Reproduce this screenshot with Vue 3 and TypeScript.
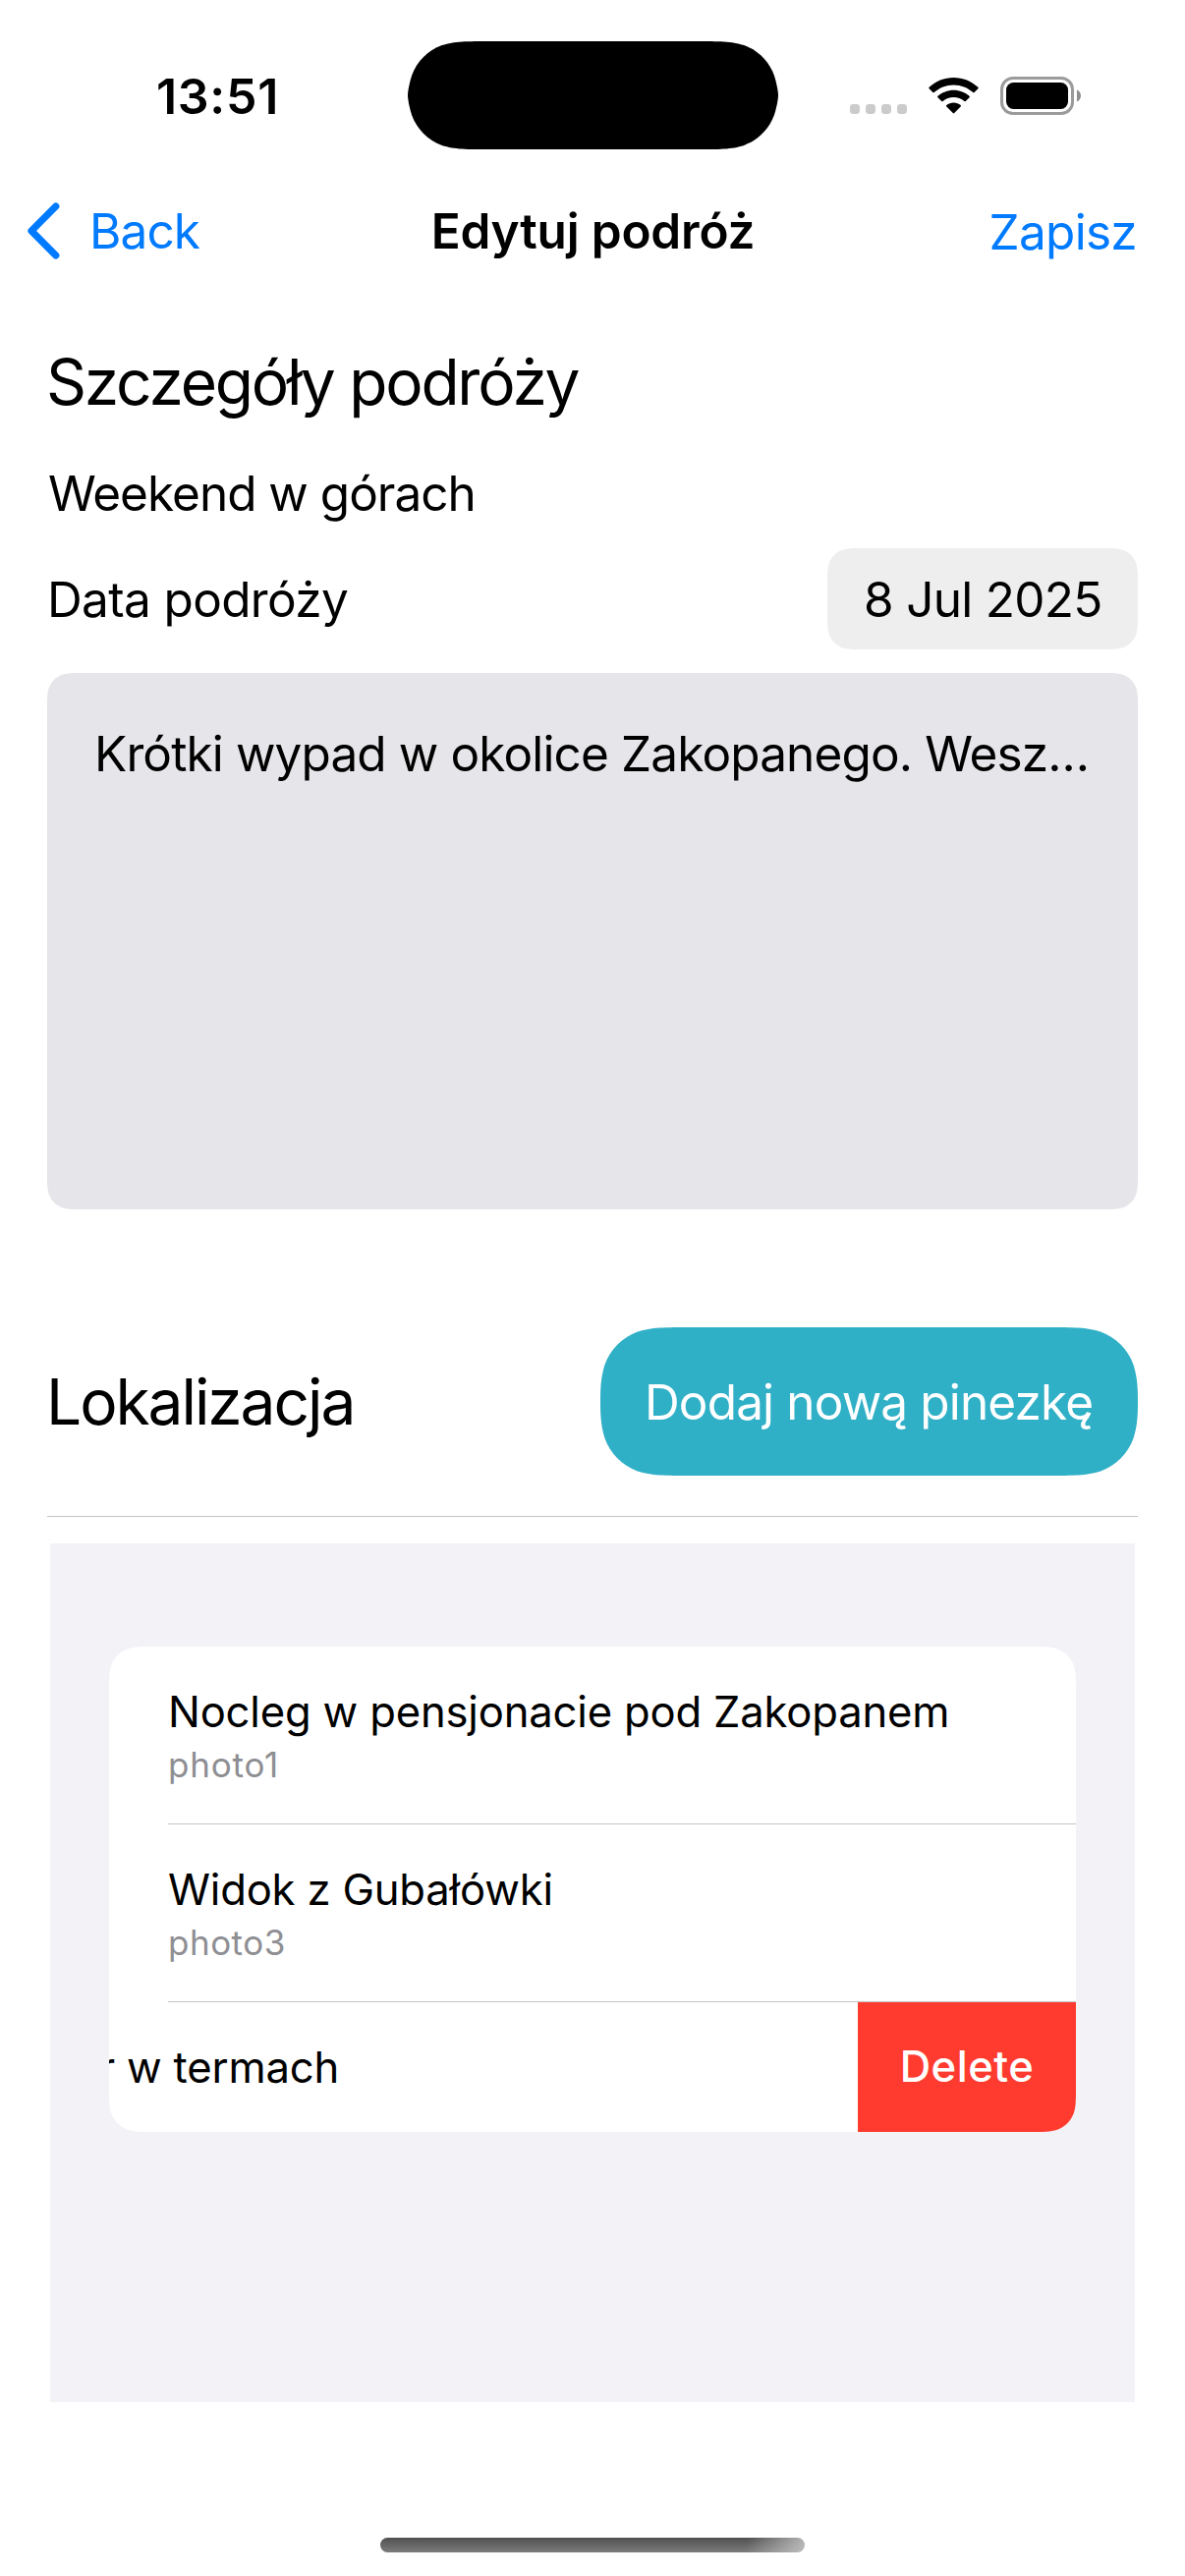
<script setup lang="ts">
interface Pin {
  title: string
  photo: string
  tracking: string
}

const pins: Pin[] = [
  { title: 'Nocleg w pensjonacie pod Zakopanem', photo: 'photo1', tracking: '0.8px' },
  { title: 'Widok z Gubałówki', photo: 'photo3', tracking: '0.5px' },
]

/** Continuous-curvature rounded rectangle, returned as a CSS clip path. */
function smoothRect(w: number, h: number, r: number): string {
  const ax = Math.min(1.528665 * r, w / 2)
  const ay = Math.min(1.528665 * r, h / 2)
  const bx = Math.min(1.08849296 * r, ax)
  const by = Math.min(1.08849296 * r, ay)
  const cx = Math.min(0.86840694 * r, bx)
  const cy = Math.min(0.86840694 * r, by)
  const d = 0.63149379 * r
  const e = 0.07491139 * r
  const f = 0.37282383 * r
  const g = 0.16905956 * r
  return `path("${[
    `M${ax} 0 L${w - ax} 0`,
    `C${w - bx} 0 ${w - cx} 0 ${w - d} ${e}`,
    `C${w - f} ${g} ${w - g} ${f} ${w - e} ${d}`,
    `C${w} ${cy} ${w} ${by} ${w} ${ay}`,
    `L${w} ${h - ay}`,
    `C${w} ${h - by} ${w} ${h - cy} ${w - e} ${h - d}`,
    `C${w - g} ${h - f} ${w - f} ${h - g} ${w - d} ${h - e}`,
    `C${w - cx} ${h} ${w - bx} ${h} ${w - ax} ${h}`,
    `L${ax} ${h}`,
    `C${bx} ${h} ${cx} ${h} ${d} ${h - e}`,
    `C${f} ${h - g} ${g} ${h - f} ${e} ${h - d}`,
    `C0 ${h - cy} 0 ${h - by} 0 ${h - ay}`,
    `L0 ${ay}`,
    `C0 ${by} 0 ${cy} ${e} ${d}`,
    `C${g} ${f} ${f} ${g} ${d} ${e}`,
    `C${cx} 0 ${bx} 0 ${ax} 0 Z`,
  ].join(' ')}")`
}
</script>

<template>
  <div class="screen">
    <header class="status">
      <span class="time">13:51</span>
      <div class="island" :style="{ clipPath: smoothRect(377, 110, 55) }"></div>
      <svg class="indicators" width="240" height="50" viewBox="0 0 240 50">
        <g fill="#cbcbcb">
          <rect x="5" y="29" width="10" height="10" rx="3.4" />
          <rect x="21" y="29" width="10" height="10" rx="3.4" />
          <rect x="37" y="29" width="10" height="10" rx="3.4" />
          <rect x="53" y="29" width="10" height="10" rx="3.4" />
        </g>
        <g fill="#000">
          <path d="M110.500 2 C120 2 128.800 5.700 135.400 11.800 C135.800 12.200 135.800 12.800 135.400 13.200 L131.600 17 C131.200 17.400 130.700 17.400 130.300 17 C125 12.200 118 9.400 110.500 9.400 C103 9.400 96 12.200 90.700 17 C90.300 17.400 89.800 17.400 89.400 17 L85.600 13.200 C85.200 12.800 85.200 12.200 85.600 11.800 C92.200 5.700 101 2 110.500 2 Z" />
          <path d="M110.500 14.700 C116.600 14.700 122.200 17.100 126.600 20.800 C127 21.200 127 21.800 126.600 22.200 L122.700 26 C122.300 26.400 121.800 26.400 121.400 26 C118.400 23.500 114.600 22.100 110.500 22.100 C106.400 22.100 102.600 23.500 99.600 26 C99.200 26.400 98.700 26.400 98.300 26 L94.400 22.200 C94 21.800 94 21.200 94.400 20.800 C98.800 17.100 104.400 14.700 110.500 14.700 Z" />
          <path d="M110.500 27.500 C113.200 27.500 115.700 28.500 117.700 30.100 C118.100 30.500 118.100 31 117.700 31.400 L111.200 38.100 C110.800 38.500 110.200 38.500 109.800 38.100 L103.300 31.400 C102.900 31 102.900 30.500 103.300 30.100 C105.300 28.500 107.800 27.500 110.500 27.500 Z" />
        </g>
        <rect x="159.500" y="2.500" width="72" height="36" rx="11.500" fill="none" stroke="#9b9b9b" stroke-width="3" />
        <rect x="164" y="7" width="63" height="27" rx="7.500" fill="#000" />
        <path d="M236 14.500 C238.600 15.600 240 18 240 20.500 C240 23 238.600 25.400 236 26.500 Z" fill="#8e8e8e" />
      </svg>
    </header>

    <nav class="nav">
      <div class="back">
        <svg width="34" height="60" viewBox="0 0 34 60">
          <path d="M28.800 5 L4 30 L28.800 55" fill="none" stroke="#007aff" stroke-width="7.200" stroke-linecap="round" stroke-linejoin="round" />
        </svg>
        <span class="back-label">Back</span>
      </div>
      <span class="nav-title">Edytuj podróż</span>
      <span class="save">Zapisz</span>
    </nav>

    <main class="content">
      <h1 class="heading">Szczegóły podróży</h1>
      <div class="name">Weekend w górach</div>
      <div class="date-row">
        <span class="date-label">Data podróży</span>
        <span class="date" :style="{ clipPath: smoothRect(316, 103, 24) }">8 Jul 2025</span>
      </div>
      <div class="notes" :style="{ clipPath: smoothRect(1110, 546, 24) }">Krótki wypad w okolice Zakopanego. Wesz…</div>

      <div class="location">
        <h2 class="location-title">Lokalizacja</h2>
        <button class="add" :style="{ clipPath: smoothRect(547, 151, 60) }">Dodaj nową pinezkę</button>
      </div>
      <div class="divider"></div>

      <section class="list">
        <div class="card" :style="{ clipPath: smoothRect(984, 494, 30) }">
          <div v-for="pin in pins" :key="pin.photo" class="row">
            <div class="row-body">
              <div class="row-title">{{ pin.title }}</div>
              <div class="row-photo" :style="{ letterSpacing: pin.tracking }">{{ pin.photo }}</div>
            </div>
          </div>
          <div class="row swiped">
            <div class="row-title shifted">Wieczór w termach</div>
            <div class="delete">Delete</div>
          </div>
        </div>
      </section>
    </main>

    <footer class="footer"><div class="home"></div></footer>
  </div>
</template>

<style>
body {
  background: #fff;
}
</style>

<style scoped>
.screen {
  display: flex;
  flex-direction: column;
  width: 1206px;
  height: 2622px;
  overflow: hidden;
  background: #fff;
  color: #000;
  font-family: Inter, "Liberation Sans", sans-serif;
  font-size: 49.5px;
  white-space: nowrap;
}

.status {
  display: grid;
  grid-template-columns: 415px 377px 1fr;
  padding-top: 42px;
  height: 110px;
}

.time {
  padding-left: 159px;
  font-size: 50px;
  font-weight: 600;
  line-height: 112px;
  letter-spacing: 0.7px;
}

.island {
  height: 110px;
  background: #000;
}

.indicators {
  margin: 35px 0 0 68px;
}

.nav {
  display: grid;
  grid-template-columns: 1fr auto 1fr;
  align-items: center;
  height: 166px;
  padding: 0 51px 0 28px;
  line-height: 60px;
}

.back {
  display: flex;
  align-items: center;
  gap: 29px;
  color: #007aff;
}

.back-label {
  letter-spacing: -0.9px;
}

.nav-title {
  margin-left: 24px;
  font-weight: 600;
  letter-spacing: -0.2px;
}

.save {
  justify-self: end;
  margin: 2px -2px 0 0;
  color: #007aff;
  letter-spacing: -0.7px;
}

.content {
  display: flex;
  flex-direction: column;
  padding: 31px 48px 0;
}

.heading,
.location-title {
  margin: 0 0 0 -1px;
  font-size: 64px;
  font-weight: 400;
  line-height: 80px;
  letter-spacing: -2.2px;
}

.name {
  margin: 42px 0 25px 1px;
  line-height: 62px;
  letter-spacing: -1px;
}

.date-row {
  display: flex;
  align-items: center;
  justify-content: space-between;
}

.date-label {
  letter-spacing: -0.64px;
}

.date {
  box-sizing: border-box;
  width: 316px;
  height: 103px;
  padding-left: 37px;
  background: #eee;
  line-height: 105px;
  letter-spacing: -0.7px;
}

.notes {
  box-sizing: border-box;
  height: 546px;
  margin-top: 24px;
  padding: 52px 48px;
  background: #e5e5ea;
  line-height: 60px;
  letter-spacing: -0.87px;
}

.location {
  display: flex;
  align-items: center;
  justify-content: space-between;
  margin-top: 120px;
}

.location-title {
  letter-spacing: -2.05px;
}

.add {
  width: 547px;
  height: 151px;
  padding: 2px 0 0 45px;
  border: 0;
  background: #30b0c7;
  color: #fff;
  font: inherit;
  line-height: 149px;
  letter-spacing: -0.85px;
  text-align: left;
}

.divider {
  height: 1px;
  margin: 41px 0 27px;
  background: #c4c4c6;
}

.list {
  box-sizing: border-box;
  height: 874px;
  margin: 0 3px;
  padding: 105px 60px 0;
  background: #f2f2f7;
}

.card {
  height: 494px;
  overflow: hidden;
  background: #fff;
}

.row {
  display: flex;
  padding-left: 60px;
}

.row-body {
  box-sizing: border-box;
  flex: 1;
  height: 181px;
  padding-top: 40px;
  border-bottom: 1px solid #c4c4c6;
}

.row-title {
  font-size: 43.6px;
  line-height: 54px;
  letter-spacing: -0.18px;
}

.row-photo {
  margin-top: 4px;
  color: #8e8e93;
  font-size: 35px;
  line-height: 44px;
}

.swiped {
  align-items: center;
  justify-content: space-between;
  height: 132px;
}

.shifted {
  margin: 1px 0 0 -222px;
}

.delete {
  width: 222px;
  background: #ff3b30;
  color: #fff;
  font-size: 43.6px;
  font-weight: 500;
  line-height: 132px;
  letter-spacing: 0.5px;
  text-align: center;
}

.footer {
  display: flex;
  justify-content: center;
  padding-top: 138px;
}

.home {
  width: 432px;
  height: 15px;
  border-radius: 8px;
  background:
    linear-gradient(100deg, transparent 86%, rgba(200, 200, 200, 0.85) 100%),
    linear-gradient(#505050, #7c7c7c);
}
</style>
